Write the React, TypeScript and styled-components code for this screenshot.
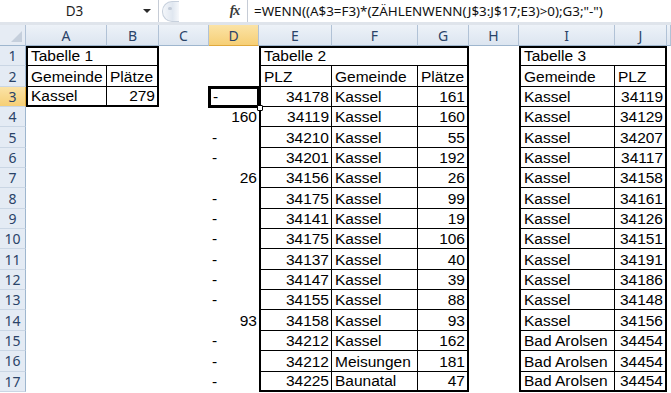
import { ReactElement } from 'react'
import styled, { createGlobalStyle } from 'styled-components'

const CELL_FONT = '"Liberation Sans", Arial, sans-serif'
const UI_FONT = '"Noto Sans", "Open Sans", sans-serif'
const HEADER_BORDER = '#b1c2d6'
const HEADER_TEXT = '#2a4368'

const COLUMN_WIDTHS = [26, 81, 52, 50, 50, 73, 86, 51, 50, 96, 52, 4]
const COLUMN_NAMES = ['A', 'B', 'C', 'D', 'E', 'F', 'G', 'H', 'I', 'J', 'K']
const ROW_COUNT = 17
const SELECTED_COL = 'D'
const SELECTED_ROW = 3

const FORMULA = '=WENN((A$3=F3)*(ZÄHLENWENN(J$3:J$17;E3)>0);G3;"-")'

const GlobalStyle = createGlobalStyle`
  html, body {
    margin: 0;
    padding: 0;
    background: #ffffff;
    overflow: hidden;
  }
`

const Window = styled.div`
  width: 671px;
  height: 393px;
  overflow: hidden;
  background: #ffffff;
  display: flex;
  flex-direction: column;
`

const FormulaBar = styled.div`
  height: 22px;
  display: flex;
  align-items: stretch;
  background: #ffffff;
  border-bottom: 3px solid #dfe4eb;
  font-family: ${UI_FONT};
`

const NameBox = styled.div`
  width: 158px;
  display: flex;
  align-items: center;
  border-right: 1px solid #c6ccd6;
`

const NameText = styled.span`
  flex: 1;
  text-align: center;
  padding-left: 6px;
  font-size: 13.5px;
  color: #1d1d1d;
`

const DropArrow = styled.span`
  width: 0;
  height: 0;
  margin-right: 7px;
  border-left: 4px solid transparent;
  border-right: 4px solid transparent;
  border-top: 4px solid #2b2b2b;
`

const Splitter = styled.div`
  width: 60px;
  display: flex;
  align-items: center;
  padding-left: 3px;
`

const SplitterPill = styled.div`
  width: 16px;
  height: 19px;
  border-radius: 10px 0 0 10px;
  border: 1px solid #c7d0dc;
  border-right: none;
  background: linear-gradient(90deg, #f3f6fa 0%, #e0e7f0 60%, #f6f8fb 100%);
  position: relative;

  &::after {
    content: '';
    position: absolute;
    left: 5px;
    top: 5px;
    width: 4px;
    height: 3px;
    border-radius: 2px;
    background: #c3ccd8;
  }
`

const FxButton = styled.div`
  width: 25px;
  display: flex;
  align-items: center;
  justify-content: center;
  font-family: 'Liberation Serif', 'Times New Roman', serif;
  font-style: italic;
  font-weight: bold;
  font-size: 14px;
  color: #3a3a3a;
  letter-spacing: -1px;
  border-right: 1px solid #c6ccd6;
`

const FormulaInput = styled.div`
  flex: 1;
  display: flex;
  align-items: center;
  padding-left: 6px;
  font-size: 13.4px;
  color: #111111;
  white-space: nowrap;
`

const Sheet = styled.div`
  display: grid;
  grid-template-columns: ${COLUMN_WIDTHS.map((w) => `${w}px`).join(' ')};
  grid-template-rows: 21px repeat(${ROW_COUNT}, 20.35px);
  font-family: ${CELL_FONT};
`

const CornerCell = styled.div`
  background: #e6ecf4;
  border-right: 1px solid ${HEADER_BORDER};
  border-bottom: 1px solid #9eb6ce;
  position: relative;

  &::after {
    content: '';
    position: absolute;
    right: 3px;
    bottom: 3px;
    width: 0;
    height: 0;
    border-left: 11px solid transparent;
    border-bottom: 11px solid #c5cfdc;
  }
`

const ColHeader = styled.div<{ $selected?: boolean }>`
  display: flex;
  align-items: center;
  justify-content: center;
  font-family: ${UI_FONT};
  font-size: 14px;
  color: ${HEADER_TEXT};
  border-right: 1px solid ${HEADER_BORDER};
  border-bottom: 1px solid ${({ $selected }) => ($selected ? '#e0a93c' : '#9eb6ce')};
  background: ${({ $selected }) =>
    $selected
      ? 'linear-gradient(#fbe3a6, #f6cf76)'
      : 'linear-gradient(#edf2f8, #dce5f0)'};
`

const RowHeader = styled.div<{ $selected?: boolean }>`
  display: flex;
  align-items: center;
  justify-content: center;
  font-family: ${UI_FONT};
  font-size: 14px;
  color: ${HEADER_TEXT};
  border-right: 1px solid ${({ $selected }) => ($selected ? '#e0a93c' : '#9eb6ce')};
  border-bottom: 1px solid #cad6e4;
  background: ${({ $selected }) =>
    $selected ? 'linear-gradient(#fbe3a6, #f6cf76)' : '#e4ebf4'};
`

type Weight = 0 | 1 | 2

const Cell = styled.div<{
  $align: 'left' | 'right'
  $span: number
  $t: Weight
  $r: Weight
  $b: Weight
  $l: Weight
  $selected?: boolean
}>`
  grid-column: span ${({ $span }) => $span};
  position: relative;
  box-sizing: border-box;
  display: flex;
  align-items: flex-end;
  justify-content: ${({ $align }) => ($align === 'right' ? 'flex-end' : 'flex-start')};
  border-style: solid;
  border-color: #000000;
  border-width: ${({ $t, $r, $b, $l }) => `${$t}px ${$r}px ${$b}px ${$l}px`};
  padding: 0 2px ${({ $b }) => Math.max(0, 1 - $b)}px 3px;
  font-size: 15.5px;
  line-height: 18px;
  color: #000000;
  white-space: nowrap;
  ${({ $selected }) =>
    $selected &&
    `
    z-index: 2;
    box-shadow: inset 0 0 0 2px #000, 0 0 0 1px #000;
    padding-left: 4px;
  `}
`

const FillHandle = styled.span`
  position: absolute;
  right: -4px;
  bottom: -4px;
  width: 4px;
  height: 4px;
  background: #ffffff;
  border: 1px solid #000000;
  border-radius: 1px;
`

type CellSpec = {
  text?: string
  align?: 'left' | 'right'
  span?: number
  t?: Weight
  r?: Weight
  b?: Weight
  l?: Weight
  selected?: boolean
}

const table1: string[][] = [
  ['Gemeinde', 'Plätze'],
  ['Kassel', '279'],
]

const table2: string[][] = [
  ['PLZ', 'Gemeinde', 'Plätze'],
  ['34178', 'Kassel', '161'],
  ['34119', 'Kassel', '160'],
  ['34210', 'Kassel', '55'],
  ['34201', 'Kassel', '192'],
  ['34156', 'Kassel', '26'],
  ['34175', 'Kassel', '99'],
  ['34141', 'Kassel', '19'],
  ['34175', 'Kassel', '106'],
  ['34137', 'Kassel', '40'],
  ['34147', 'Kassel', '39'],
  ['34155', 'Kassel', '88'],
  ['34158', 'Kassel', '93'],
  ['34212', 'Kassel', '162'],
  ['34212', 'Meisungen', '181'],
  ['34225', 'Baunatal', '47'],
]

const table3: string[][] = [
  ['Gemeinde', 'PLZ'],
  ['Kassel', '34119'],
  ['Kassel', '34129'],
  ['Kassel', '34207'],
  ['Kassel', '34117'],
  ['Kassel', '34158'],
  ['Kassel', '34161'],
  ['Kassel', '34126'],
  ['Kassel', '34151'],
  ['Kassel', '34191'],
  ['Kassel', '34186'],
  ['Kassel', '34148'],
  ['Kassel', '34156'],
  ['Bad Arolsen', '34454'],
  ['Bad Arolsen', '34454'],
  ['Bad Arolsen', '34454'],
]

// results of the formula in column D, rows 3..17
const columnD = ['-', '160', '-', '-', '26', '-', '-', '-', '-', '-', '-', '93', '-', '-', '-']

const isNumber = (value: string) => /^\d+$/.test(value)

// a bordered table: title row merged over all columns, thin inner lines, thick frame
const tableCells = (
  row: number,
  title: string,
  body: string[][],
): CellSpec[] => {
  const cols = body[0].length
  const lastRow = body.length + 1
  if (row === 1) return [{ text: title, span: cols, t: 2, l: 2, r: 2, b: 1 }]
  if (row > lastRow) return Array.from({ length: cols }, () => ({}))
  return body[row - 2].map((text, i) => ({
    text,
    align: isNumber(text) ? 'right' : 'left',
    l: i === 0 ? 2 : 0,
    r: i === cols - 1 ? 2 : 1,
    b: row === lastRow ? 2 : 1,
  }))
}

const buildRow = (row: number): CellSpec[] => {
  const d = row >= 3 ? columnD[row - 3] : undefined
  return [
    ...tableCells(row, 'Tabelle 1', table1),
    {},
    { text: d, align: d && isNumber(d) ? 'right' : 'left', selected: row === SELECTED_ROW },
    ...tableCells(row, 'Tabelle 2', table2),
    {},
    ...tableCells(row, 'Tabelle 3', table3),
    {},
  ]
}

const App = (): ReactElement => (
  <Window>
    <GlobalStyle />
    <FormulaBar>
      <NameBox>
        <NameText>D3</NameText>
        <DropArrow />
      </NameBox>
      <Splitter>
        <SplitterPill />
      </Splitter>
      <FxButton>fx</FxButton>
      <FormulaInput>{FORMULA}</FormulaInput>
    </FormulaBar>
    <Sheet>
      <CornerCell />
      {COLUMN_NAMES.map((name) => (
        <ColHeader key={name} $selected={name === SELECTED_COL}>
          {name === 'K' ? '' : name}
        </ColHeader>
      ))}
      {Array.from({ length: ROW_COUNT }, (_, i) => i + 1).map((row) => [
        <RowHeader key={`h${row}`} $selected={row === SELECTED_ROW}>
          {row}
        </RowHeader>,
        ...buildRow(row).map((cell, i) => (
          <Cell
            key={`${row}-${i}`}
            $align={cell.align ?? 'left'}
            $span={cell.span ?? 1}
            $t={cell.t ?? 0}
            $r={cell.r ?? 0}
            $b={cell.b ?? 0}
            $l={cell.l ?? 0}
            $selected={cell.selected}
          >
            {cell.text}
            {cell.selected && <FillHandle />}
          </Cell>
        )),
      ])}
    </Sheet>
  </Window>
)

export default App
